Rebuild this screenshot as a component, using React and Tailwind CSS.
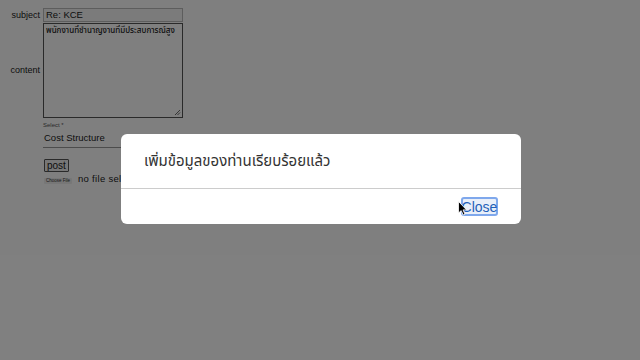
export default function App() {
  const thai = { fontFamily: '"Noto Sans Thai", "Noto Sans", "DejaVu Sans", sans-serif' };
  return (
    <div className="relative w-[640px] h-[360px] bg-white overflow-hidden text-[#222]" style={{ fontFamily: '"Liberation Sans", "Noto Sans Thai", sans-serif' }}>
      {/* form */}
      <div className="pt-[8px] pl-[8px]">
        <div className="flex items-center">
          <div className="w-[35px] pr-[3px] text-right text-[9px] leading-none">subject</div>
          <div className="w-[140px] h-[14px] border border-[#bbb] bg-[#f6f6f6] text-[9.5px] leading-[12px] pl-[2px]">Re: KCE</div>
        </div>
        <div className="flex items-center mt-px">
          <div className="w-[35px] pr-[3px] text-right text-[9px] leading-none">content</div>
          <div className="relative w-[140px] h-[95px] border border-[#555] bg-white text-[8px] leading-[12px] pl-[2px] pt-px whitespace-nowrap font-medium" style={thai}>
            พนักงานที่ชำนาญงานที่มีประสบการณ์สูง
            <svg className="absolute right-[1px] bottom-[1px]" width="7" height="7" viewBox="0 0 7 7">
              <path d="M1 6L6 1M3.5 6L6 3.5" stroke="#444" strokeWidth="0.8" />
            </svg>
          </div>
        </div>
        <div className="ml-[35px] mt-[4px] w-[300px]">
          <div className="text-[6px] leading-none text-[#555]">Select *</div>
          <div className="text-[9.5px] leading-none mt-[5px] pl-px pb-[4px] border-b border-[#999]">Cost Structure</div>
        </div>
        <div className="ml-[36px] mt-[11px] flex">
          <div className="border border-[#555] bg-[#eee] text-[10px] leading-[11px] px-[2px] h-[13px] rounded-[1px]">post</div>
        </div>
        <div className="ml-[36px] mt-px flex items-start">
          <div className="mt-[5px] text-[4.5px] leading-none bg-[#eee] px-[2px] py-[1px] rounded-[1px] text-[#333]">Choose File</div>
          <div className="ml-[6px] text-[9.5px] leading-none mt-[1px] tracking-[0.3px]">no file selected</div>
        </div>
      </div>

      {/* overlay */}
      <div className="absolute inset-0 bg-black/50"></div>

      {/* modal */}
      <div className="absolute left-[121px] top-[134px] w-[400px] h-[90px] bg-white rounded-[6px] flex flex-col">
        <div className="h-[55px] pl-[23px] pt-[17px] text-[15px] leading-[21px] text-[#333] border-b border-[#ccc]" style={thai}>
          เพิ่มข้อมูลของท่านเรียบร้อยแล้ว
        </div>
        <div className="flex justify-end pr-[23px] pt-[8px]">
          <div className="h-[19px] w-[37px] flex items-center justify-center rounded-[3px] border-2 border-[#7fa8ec] bg-[#e9eff9] text-[#1f5fb8] text-[14px] leading-none" style={{ fontFamily: '"Liberation Sans", sans-serif' }}>
            Close
          </div>
        </div>
      </div>

      {/* cursor */}
      <svg className="absolute left-[458px] top-[201px]" width="10" height="15" viewBox="0 0 10 15">
        <path d="M0.5 0.5 L0.5 12 L3.2 9.6 L5.2 14 L7 13.2 L5 8.9 L8.6 8.9 Z" fill="#000" stroke="#fff" strokeWidth="0.8" />
      </svg>
    </div>
  );
}
